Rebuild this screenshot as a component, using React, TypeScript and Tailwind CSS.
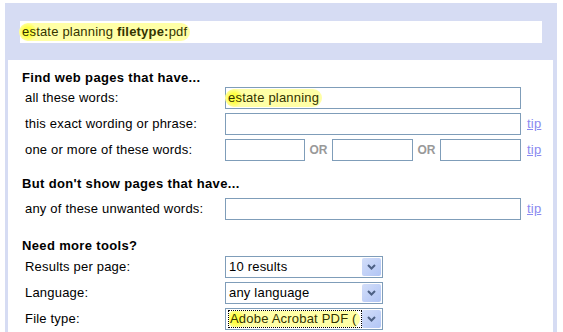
import React from "react";

function Arrow() {
  return (
    <div className="w-[19px] h-[18px] rounded-[2px] bg-gradient-to-br from-[#d3def9] to-[#b1c5f5] flex items-center justify-center">
      <svg width="9" height="6" viewBox="0 0 9 6">
        <path d="M1 1 L4.5 4.5 L8 1" fill="none" stroke="#4d6185" strokeWidth="2" />
      </svg>
    </div>
  );
}

function Select({ children, focus }: { children: React.ReactNode; focus?: boolean }) {
  return (
    <div className="w-[158px] h-[22px] border border-[#7f9db9] bg-white flex items-center pl-[2px] pr-[1px]">
      <div className={"flex-1 h-[18px] flex items-center overflow-hidden whitespace-nowrap " + (focus ? "border border-dotted border-black" : "")}>
        {children}
      </div>
      <Arrow />
    </div>
  );
}

function Input({ w, children }: { w: string; children?: React.ReactNode }) {
  return (
    <div className={w + " h-[22px] border border-[#7f9db9] bg-white flex items-center pl-[1px]"}>{children}</div>
  );
}

function Tip() {
  return <span className="ml-[6px] text-[#8a8af0] underline text-[13px]">tip</span>;
}

function Hl({ children }: { children: React.ReactNode }) {
  return (
    <span className="relative inline-block bg-[#ffffa6] rounded-full pl-[1px] pr-[3px] leading-[18px] text-[#333300]">
      <span className="absolute left-[-2px] top-[0px] w-[18px] h-[18px] rounded-full bg-[radial-gradient(circle,#ffff44_35%,#ffffa6_75%)]" />
      <span className="relative">{children}</span>
    </span>
  );
}

export default function App() {
  const row = "flex items-center h-[22px]";
  const label = "w-[203px] pl-[3px] shrink-0";
  return (
    <div className="h-[332px] bg-white pt-[3px] pl-[5px] pr-[6px] font-['Liberation_Sans',Arial,sans-serif] text-[13px] leading-4 text-black tracking-[0.2px] overflow-hidden">
      <div className="bg-[#d6dcf3] pl-[3px] pr-[4px] h-full">
        <div className="pt-[18px] pb-[17px] pl-[12px] pr-[11px]">
          <div className="bg-white h-[22px] flex items-center pl-[1px]">
            <Hl>
              estate planning <b>filetype:</b>pdf
            </Hl>
          </div>
        </div>
        <div className="bg-white pt-[10px] pl-[14px] h-[272px]">
          <div className="font-bold h-4 tracking-[0.35px]">Find web pages that have...</div>
          <div className="mt-[1px] flex flex-col gap-[4px]">
            <div className={row}>
              <div className={label}>all these words:</div>
              <Input w="w-[296px]">
                <Hl>estate planning</Hl>
              </Input>
            </div>
            <div className={row}>
              <div className={label}>this exact wording or phrase:</div>
              <Input w="w-[296px]" />
              <Tip />
            </div>
            <div className={row}>
              <div className={label}>one or more of these words:</div>
              <Input w="w-[80px]" />
              <span className="w-[27px] text-center text-[12px] font-bold text-[#999999] tracking-normal">OR</span>
              <Input w="w-[81px]" />
              <span className="w-[27px] text-center text-[12px] font-bold text-[#999999] tracking-normal">OR</span>
              <Input w="w-[81px]" />
              <Tip />
            </div>
          </div>
          <div className="mt-[15px] font-bold h-4 tracking-[0.35px]">But don't show pages that have...</div>
          <div className="mt-[6px]">
            <div className={row}>
              <div className={label}>any of these unwanted words:</div>
              <Input w="w-[296px]" />
              <Tip />
            </div>
          </div>
          <div className="mt-[18px] font-bold h-4 tracking-[0.35px]">Need more tools?</div>
          <div className="mt-[2px] flex flex-col gap-[4px]">
            <div className={row}>
              <div className={label}>Results per page:</div>
              <Select>
                <span className="pl-[1px]">10 results</span>
              </Select>
            </div>
            <div className={row}>
              <div className={label}>Language:</div>
              <Select>
                <span className="pl-[1px]">any language</span>
              </Select>
            </div>
            <div className={row}>
              <div className={label}>File type:</div>
              <Select focus>
                <Hl>Adobe Acrobat PDF (</Hl>
              </Select>
            </div>
          </div>
        </div>
      </div>
    </div>
  );
}
